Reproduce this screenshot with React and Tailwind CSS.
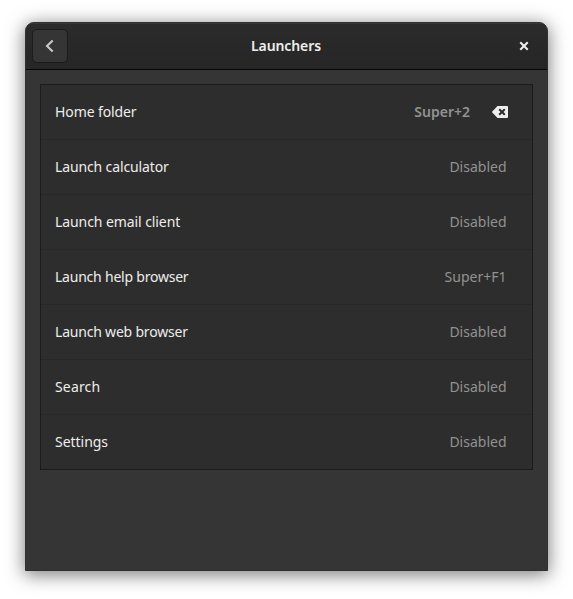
const rows = [
  { label: 'Home folder', value: 'Super+2', custom: true, tracking: 'tracking-[-0.1px]' },
  { label: 'Launch calculator', value: 'Disabled', tracking: 'tracking-[-0.13px]' },
  { label: 'Launch email client', value: 'Disabled', tracking: 'tracking-[-0.08px]' },
  { label: 'Launch help browser', value: 'Super+F1', tracking: 'tracking-[-0.22px]' },
  { label: 'Launch web browser', value: 'Disabled', tracking: 'tracking-[-0.2px]' },
  { label: 'Search', value: 'Disabled', tracking: 'tracking-[0.15px]' },
  { label: 'Settings', value: 'Disabled', tracking: 'tracking-[-0.03px]' },
];

function BackIcon() {
  return (
    <svg width="16" height="16" viewBox="0 0 16 16" fill="none" stroke="#c8c8c5" strokeWidth="2.1">
      <path d="M10.7 2.4 5 8l5.7 5.6" />
    </svg>
  );
}

function CloseIcon() {
  return (
    <svg width="16" height="16" viewBox="0 0 16 16" stroke="#eeeeec" strokeWidth="2.1">
      <path d="M5 5 11 11M11 5 5 11" strokeLinecap="square" />
    </svg>
  );
}

function ClearIcon() {
  return (
    <svg width="16" height="16" viewBox="0 0 16 16">
      <path d="M5.5 2H15a1 1 0 0 1 1 1v10a1 1 0 0 1-1 1H5.5L.3 8.6a1 1 0 0 1 0-1.2Z" fill="#eeeeec" />
      <path d="m7.2 5.2 5.6 5.6m0-5.6-5.6 5.6" stroke="#2d2d2d" strokeWidth="2" />
    </svg>
  );
}

function Row({ label, value, custom, tracking }) {
  return (
    <li className="flex h-[55px] items-center border-b border-[#282828] pl-3.5 pr-[25.5px] last:h-[54px] last:border-b-0">
      <span className={`grow whitespace-nowrap text-[#eeeeec] ${tracking}`}>{label}</span>
      <span className={custom ? 'mr-[22px] font-semibold text-[#929291]' : 'text-[#929291]'}>{value}</span>
      {custom && (
        <button aria-label="Reset" className="-mr-[1.5px]">
          <ClearIcon />
        </button>
      )}
    </li>
  );
}

export default function App() {
  return (
    <div className="h-[599px] w-[573px] overflow-hidden bg-white pl-[25px] pt-[22px] font-['Noto_Sans',sans-serif] text-[14px] leading-5">
      <div className="flex h-[549px] w-[523px] flex-col overflow-hidden rounded-t-[9px] border border-[#303030] bg-[#353535] shadow-[0_3px_18px_1px_rgba(0,0,0,0.5)]">
        <header className="flex h-[47px] shrink-0 items-center border-b border-[#070707] bg-linear-to-t from-[#262626] to-[#2b2b2b] pl-1.5 pr-[15px] shadow-[inset_0_1px_#383838]">
          <button aria-label="Back" className="flex h-[34px] w-9 items-center justify-center rounded-[5px] border border-[#1b1b1b] bg-[#353535]">
            <BackIcon />
          </button>
          <h1 className="grow pr-[12px] text-center font-semibold tracking-[-0.1px] text-[#eeeeec]">Launchers</h1>
          <button aria-label="Close">
            <CloseIcon />
          </button>
        </header>
        <ul className="mx-3.5 mt-3.5 h-[386px] border border-[#1b1b1b] bg-[#2d2d2d]">
          {rows.map((row) => (
            <Row key={row.label} {...row} />
          ))}
        </ul>
      </div>
    </div>
  );
}
